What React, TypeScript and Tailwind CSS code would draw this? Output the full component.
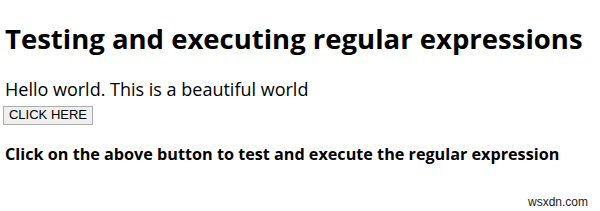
import React from "react";

export default function App() {
  return (
    <div className="relative w-[600px] h-[211px] bg-white overflow-hidden text-black" style={{ fontFamily: '"Open Sans", "Noto Sans", sans-serif' }}>
      <div className="px-[5px] pt-[21px]">
        <h1 className="text-[27.5px] leading-[36px] font-bold">Testing and executing regular expressions</h1>
        <p className="mt-[20px] text-[18px] leading-[24px]">Hello world. This is a beautiful world</p>
        <button
          className="-ml-[2px] h-[19px] w-[90px] border border-[#adadad] bg-[#efefef] text-[13px] leading-[16px] text-black"
          style={{ fontFamily: '"Liberation Sans", Arial, sans-serif' }}
        >
          CLICK HERE
        </button>
        <p className="mt-[17px] text-[16.2px] leading-[24px] font-bold">Click on the above button to test and execute the regular expression</p>
      </div>
      <div className="absolute right-[12px] bottom-[3px] text-[12px] leading-[12px] text-[#222]" style={{ fontFamily: '"Liberation Sans", Arial, sans-serif' }}>wsxdn.com</div>
    </div>
  );
}
